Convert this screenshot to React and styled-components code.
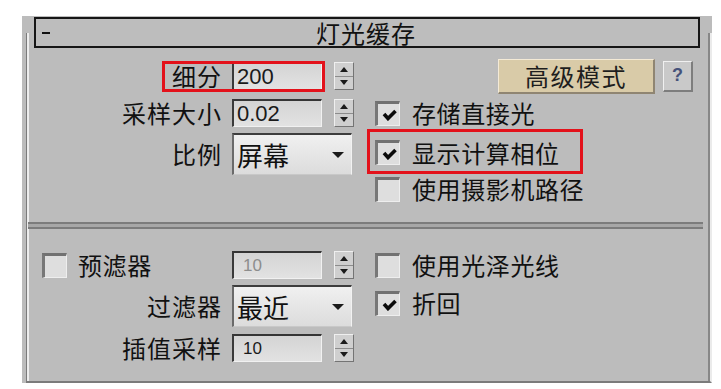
import React from "react";
import styled, { createGlobalStyle } from "styled-components";

const GlobalStyle = createGlobalStyle`
  html, body {
    margin: 0;
    background: #ffffff;
  }
  body {
    font-family: "Noto Sans CJK SC", "Liberation Sans", sans-serif;
    color: #111;
  }
`;

const Page = styled.div`
  padding: 16px 0 0 22px;
`;

const Panel = styled.div`
  width: 690px;
  height: 367px;
  box-sizing: border-box;
  padding-top: 1px;
  background: #bcbcbc;
  display: flex;
  flex-direction: column;
`;

const TitleBar = styled.div`
  position: relative;
  z-index: 1;
  height: 31px;
  box-sizing: border-box;
  margin: 0 12px -15px 12px;
  border: 2px solid #161616;
  background: #bdbdbd;
  display: grid;
  grid-template-columns: 40px 1fr 40px;
  align-items: center;
`;

const Collapse = styled.span`
  width: 8px;
  height: 2px;
  margin-left: 6px;
  background: #111;
`;

const Title = styled.span`
  text-align: center;
  font-size: 24px;
  letter-spacing: 1px;
  line-height: 1;
  margin-left: -2px;
`;

const Frame = styled.div`
  flex: 1;
  margin-left: 4px;
  padding-top: 24px;
  border-left: 1px solid #7b7b7b;
  border-right: 2px solid #ebebeb;
  border-bottom: 2px solid #7b7b7b;
  box-shadow: inset 2px 0 #ededed, inset -2px 0 #878787;
`;

const Row = styled.div`
  display: flex;
  align-items: center;
  height: ${(p) => p.$h}px;
  margin-top: ${(p) => p.$top || 0}px;
`;

const LeftCell = styled.div`
  width: 327px;
  flex: none;
  box-sizing: border-box;
  padding-left: ${(p) => p.$pad || 0}px;
  display: flex;
  align-items: center;
  justify-content: flex-end;
  gap: 10px;
`;

const RightCell = styled.div`
  flex: 1;
  display: flex;
  align-items: center;
  justify-content: ${(p) => (p.$end ? "flex-end" : "flex-start")};
  gap: ${(p) => (p.$end ? 8 : 0)}px;
  padding: 0 17px 0 21px;
  margin-top: ${(p) => p.$shift || 0}px;
`;

const Label = styled.span`
  font-size: 24px;
  letter-spacing: 1px;
  line-height: 1;
  white-space: nowrap;
`;

const Mark = styled.span`
  position: relative;
  display: inline-flex;
  align-items: center;
  gap: ${(p) => p.$gap}px;

  &::after {
    content: "";
    position: absolute;
    inset: ${(p) => p.$inset};
    border: 3px solid #e3121b;
    pointer-events: none;
  }
`;

const Field = styled.div`
  width: 90px;
  height: 28px;
  box-sizing: border-box;
  flex: none;
  display: flex;
  align-items: center;
  padding-left: ${(p) => (p.$small ? 9 : 3)}px;
  border-style: solid;
  border-width: 2px 1px 1px 2px;
  border-color: #353535 #f1f1f1 #f1f1f1 #3a3a3a;
  background: linear-gradient(#d4d4d4, #e2e2e2);
  font-family: "Liberation Sans", Arial, sans-serif;
  font-size: ${(p) => (p.$small ? 17 : 22)}px;
  color: ${(p) => (p.$disabled ? "#8d8d8d" : "#1a1a1a")};
  line-height: 1;
`;

const Spinner = styled.div`
  width: 20px;
  height: 28px;
  box-sizing: border-box;
  flex: none;
  margin-left: 2px;
  display: flex;
  flex-direction: column;
  border: 1px solid;
  border-color: #efefef #747474 #747474 #efefef;
  background: #cfcfcf;
`;

const SpinHalf = styled.div`
  flex: 1;
  display: flex;
  align-items: center;
  justify-content: center;
  border-bottom: ${(p) => (p.$top ? "1px solid #8c8c8c" : "none")};
`;

const Arrow = styled.span`
  width: 0;
  height: 0;
  border-left: ${(p) => p.$w}px solid transparent;
  border-right: ${(p) => p.$w}px solid transparent;
  ${(p) =>
    p.$up
      ? `border-bottom: ${p.$h}px solid #1b1b1b;`
      : `border-top: ${p.$h}px solid #1b1b1b;`}
`;

const Dropdown = styled.div`
  width: 120px;
  height: 42px;
  box-sizing: border-box;
  flex: none;
  margin-right: 2px;
  padding: 0 7px 0 3px;
  display: flex;
  align-items: center;
  justify-content: space-between;
  border-style: solid;
  border-width: 2px 1px 1px 2px;
  border-color: #3d3d3d #f2f2f2 #c8c8c8 #6a6a6a;
  background: linear-gradient(#f0f0f0, #dcdcdc);
  font-size: 26px;
  line-height: 1;
`;

const CheckBox = styled.span`
  width: 25px;
  height: 25px;
  box-sizing: border-box;
  flex: none;
  display: flex;
  align-items: center;
  justify-content: center;
  padding: 1px 0 0 1px;
  border-style: solid;
  border-width: 3px 1px 1px 3px;
  border-color: #717171 #eeeeee #eeeeee #777777;
  background: #dedede;
`;

const CheckGroup = styled.span`
  display: inline-flex;
  align-items: center;
  gap: ${(p) => p.$gap || 12}px;
  margin-right: ${(p) => (p.$push ? "auto" : "0")};
`;

const CheckText = styled.span`
  font-size: 24px;
  letter-spacing: 0.6px;
  line-height: 1;
  white-space: nowrap;
`;

const ModeButton = styled.button`
  width: 157px;
  height: 35px;
  box-sizing: border-box;
  padding: 0;
  border-style: solid;
  border-width: 1px 2px 2px 1px;
  border-color: #f4ead6 #8f8572 #8f8572 #f4ead6;
  background: #d9cba8;
  font-family: "Noto Sans CJK SC", sans-serif;
  font-size: 24px;
  letter-spacing: 1.5px;
  color: #1e1e1e;
  line-height: 1;
`;

const HelpButton = styled.button`
  width: 30px;
  height: 31px;
  box-sizing: border-box;
  padding: 0;
  border-style: solid;
  border-width: 1px 2px 2px 1px;
  border-color: #f0f0f0 #7d7d7d #7d7d7d #f0f0f0;
  background: #c9c9c9;
  font-family: "Liberation Sans", Arial, sans-serif;
  font-weight: bold;
  font-size: 18px;
  color: #45527a;
`;

const Divider = styled.div`
  height: 3px;
  margin: 19px 7px 0 1px;
  border-top: 2px solid #7c7c7c;
  border-bottom: 2px solid #7c7c7c;
  background: #a7a7a7;
`;

const Check = ({ on }) => (
  <CheckBox>
    {on && (
      <svg width="15" height="12" viewBox="0 0 15 12">
        <path
          d="M2 5 L6 9.5 L13.5 2"
          fill="none"
          stroke="#0b0b0b"
          strokeWidth="3.6"
          strokeLinejoin="miter"
        />
      </svg>
    )}
  </CheckBox>
);

const Spin = () => (
  <Spinner>
    <SpinHalf $top>
      <Arrow $up $w={4} $h={5} />
    </SpinHalf>
    <SpinHalf>
      <Arrow $w={4} $h={5} />
    </SpinHalf>
  </Spinner>
);

const Select = ({ value }) => (
  <Dropdown>
    <span>{value}</span>
    <Arrow $w={6} $h={6} />
  </Dropdown>
);

const Option = ({ on, children, gap }) => (
  <CheckGroup $gap={gap}>
    <Check on={on} />
    <CheckText>{children}</CheckText>
  </CheckGroup>
);

export default function App() {
  return (
    <>
      <GlobalStyle />
      <Page>
        <Panel>
          <TitleBar>
            <Collapse />
            <Title>灯光缓存</Title>
            <span />
          </TitleBar>
          <Frame>
            <Row $h={38}>
              <LeftCell>
                <Mark $gap={10} $inset="-1px -3px -2px -10px">
                  <Label>细分</Label>
                  <Field>200</Field>
                </Mark>
                <Spin />
              </LeftCell>
              <RightCell $end>
                <ModeButton>高级模式</ModeButton>
                <HelpButton>?</HelpButton>
              </RightCell>
            </Row>
            <Row $h={36}>
              <LeftCell>
                <Label>采样大小</Label>
                <Field>0.02</Field>
                <Spin />
              </LeftCell>
              <RightCell>
                <Option on>存储直接光</Option>
              </RightCell>
            </Row>
            <Row $h={46}>
              <LeftCell>
                <Label>比例</Label>
                <Select value="屏幕" />
              </LeftCell>
              <RightCell $shift={-3}>
                <Mark $gap={0} $inset="-11px -23px -9px -8px">
                  <Option on>显示计算相位</Option>
                </Mark>
              </RightCell>
            </Row>
            <Row $h={26}>
              <LeftCell />
              <RightCell $shift={-2}>
                <Option>使用摄影机路径</Option>
              </RightCell>
            </Row>
            <Divider />
            <Row $h={34} $top={19}>
              <LeftCell $pad={15}>
                <CheckGroup $push $gap={11}>
                  <Check />
                  <CheckText>预滤器</CheckText>
                </CheckGroup>
                <Field $small $disabled>
                  10
                </Field>
                <Spin />
              </LeftCell>
              <RightCell>
                <Option>使用光泽光线</Option>
              </RightCell>
            </Row>
            <Row $h={48}>
              <LeftCell>
                <Label>过滤器</Label>
                <Select value="最近" />
              </LeftCell>
              <RightCell $shift={-6}>
                <Option on>折回</Option>
              </RightCell>
            </Row>
            <Row $h={36}>
              <LeftCell>
                <Label>插值采样</Label>
                <Field $small>10</Field>
                <Spin />
              </LeftCell>
              <RightCell />
            </Row>
          </Frame>
        </Panel>
      </Page>
    </>
  );
}
